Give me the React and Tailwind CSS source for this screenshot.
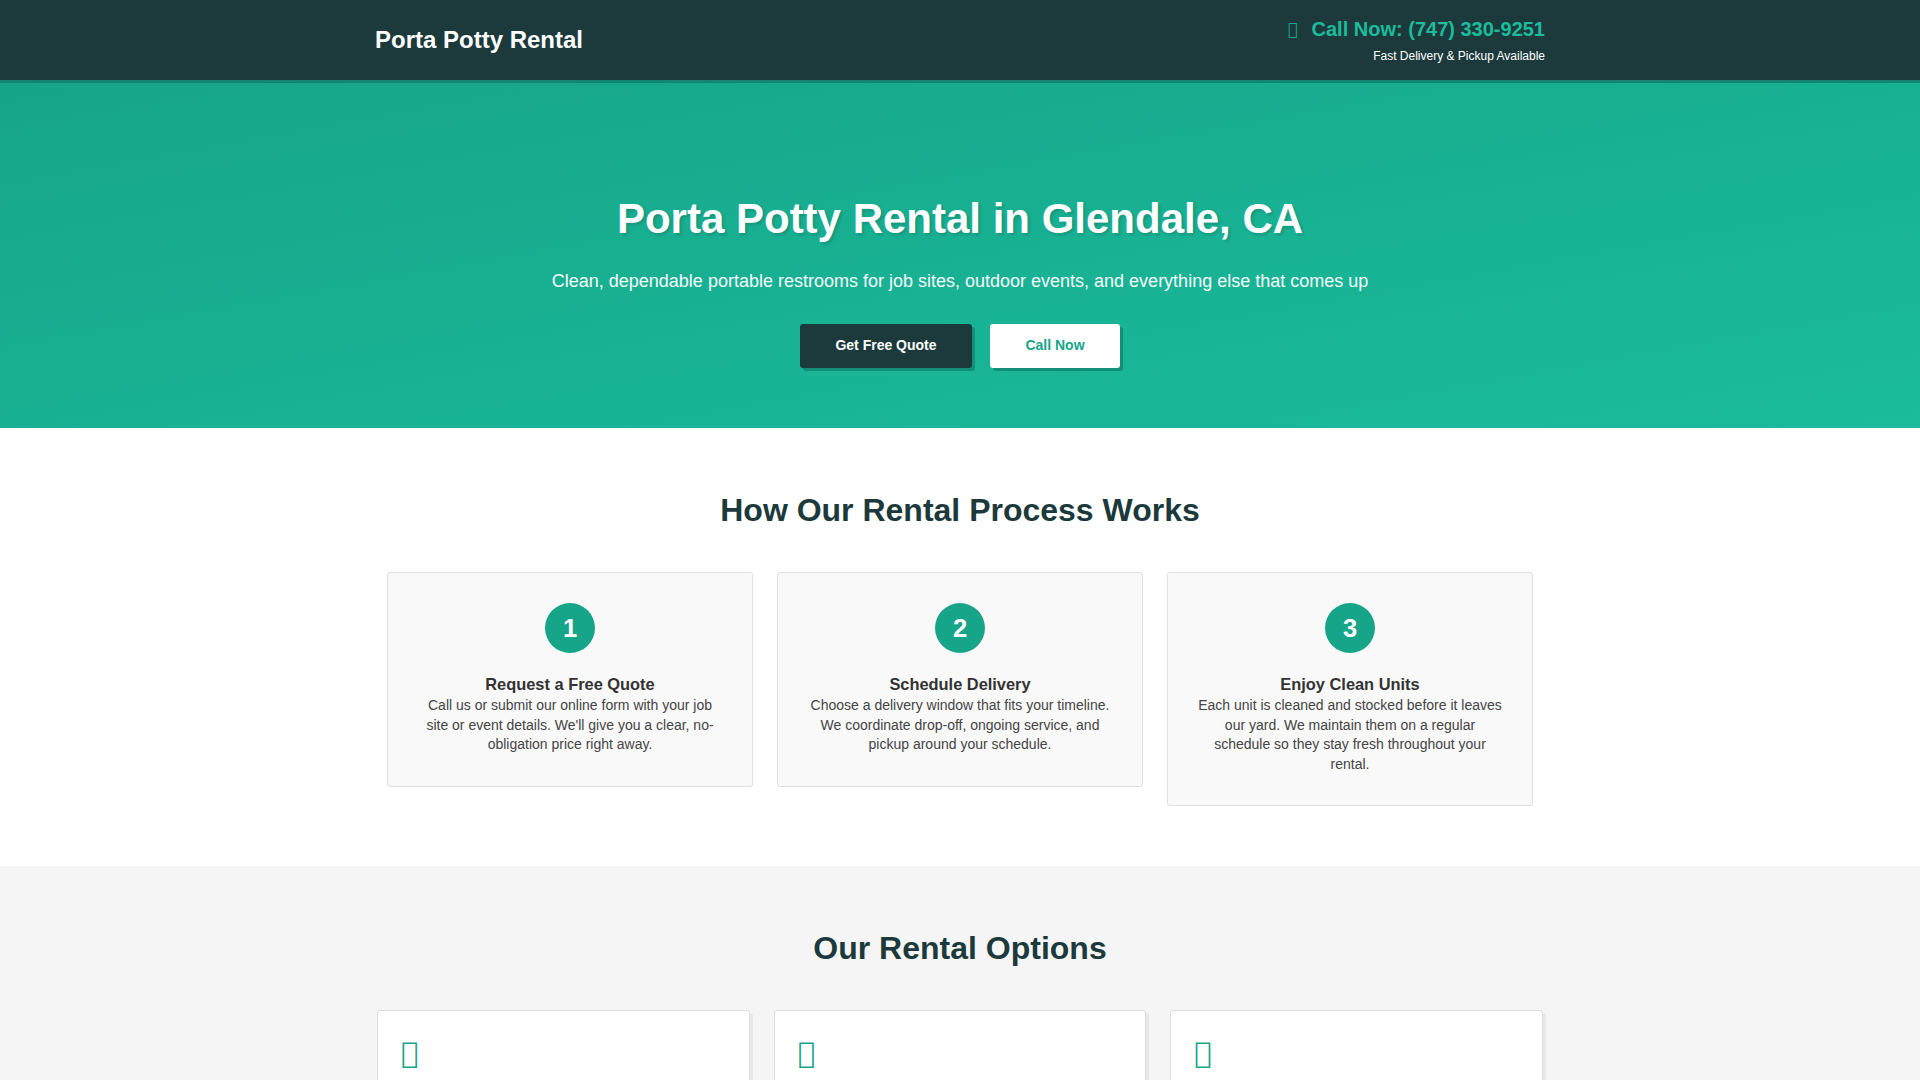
export default function App() {
  const steps = [
    ["1", "Request a Free Quote", "Call us or submit our online form with your job site or event details. We'll give you a clear, no-obligation price right away."],
    ["2", "Schedule Delivery", "Choose a delivery window that fits your timeline. We coordinate drop-off, ongoing service, and pickup around your schedule."],
    ["3", "Enjoy Clean Units", "Each unit is cleaned and stocked before it leaves our yard. We maintain them on a regular schedule so they stay fresh throughout your rental."],
  ];
  return (
    <div className="h-[1080px] overflow-hidden bg-white font-['Liberation_Sans',Arial,sans-serif] text-[#333333] text-[16px] leading-[1.6]">
      <header className="h-[83px] bg-[#1c3a3c] border-b-[3px] border-[#148571]">
        <div className="w-[1170px] h-[80px] mx-auto flex items-center justify-between">
          <div className="text-[24px] font-bold text-white">Porta Potty Rental</div>
          <div className="text-right">
            <div className="text-[20px] font-bold text-[#1abc9c] leading-[32px]">
              <span className="text-[17px] leading-none align-[1px] font-normal font-['DejaVu_Sans'] text-[#17a589] mr-[8px]">{"\uf095"}</span> Call Now: (747) 330-9251
            </div>
            <div className="text-[12px] text-white mt-[2px] leading-[1.6]">Fast Delivery &amp; Pickup Available</div>
          </div>
        </div>
      </header>
      <section className="h-[345px] bg-gradient-to-br from-[#17a589] to-[#1abc9c] flex flex-col items-center pt-[111px] text-white">
        <h1 className="text-[42px] font-bold leading-[1.2] [text-shadow:2px_2px_3px_rgba(0,0,0,0.15)]">Porta Potty Rental in Glendale, CA</h1>
        <p className="text-[18px] mt-[23px] leading-[1.6] text-[#f4fbfa]">Clean, dependable portable restrooms for job sites, outdoor events, and everything else that comes up</p>
        <div className="flex gap-[18px] mt-[28px]">
          <button className="h-[44px] w-[172px] pb-[1px] rounded-[3px] bg-[#1c3a3c] text-white text-[14px] font-bold shadow-[3px_3px_0_#148f77]">Get Free Quote</button>
          <button className="h-[44px] w-[130px] pb-[1px] rounded-[3px] bg-white text-[#17a589] text-[14px] font-bold shadow-[3px_3px_0_#148f77]">Call Now</button>
        </div>
      </section>
      <section className="bg-white pt-[61px] pb-[60px]">
        <h2 className="text-[32px] font-bold text-center text-[#1c3a3c] leading-[42px]">How Our Rental Process Works</h2>
        <div className="w-[1146px] mx-auto mt-[41px] grid grid-cols-3 gap-[24px] items-start">
          {steps.map(([n, t, d]) => (
            <div key={n} className="bg-[#f9f9f9] border border-[#e0e0e0] rounded-[3px] px-[28px] pt-[30px] pb-[31px] text-center">
              <div className="w-[50px] h-[50px] rounded-full bg-[#17a589] text-white text-[25.6px] font-bold mx-auto flex items-center justify-center">{n}</div>
              <h3 className="text-[16.4px] font-bold mt-[19px] leading-[24px]">{t}</h3>
              <p className="text-[14px] leading-[1.4] text-[#444444]">{d}</p>
            </div>
          ))}
        </div>
      </section>
      <section className="bg-[#f5f5f5] pt-[61px] pb-[60px]">
        <h2 className="text-[32px] font-bold text-center text-[#1c3a3c] leading-[42px]">Our Rental Options</h2>
        <div className="w-[1166px] ml-[377px] mt-[41px] grid grid-cols-3 gap-[24px]">
          {[0, 1, 2].map((i) => (
            <div key={i} className="bg-white border border-[#dddddd] rounded-[3px] h-[300px] pl-[23px] pt-[21px] shadow-[3px_3px_0_rgba(0,0,0,0.05)]">
              <div className="text-[29px] font-['DejaVu_Sans'] text-[#17a589] leading-[1.5]">{"\uf0c8"}</div>
            </div>
          ))}
        </div>
      </section>
    </div>
  );
}
